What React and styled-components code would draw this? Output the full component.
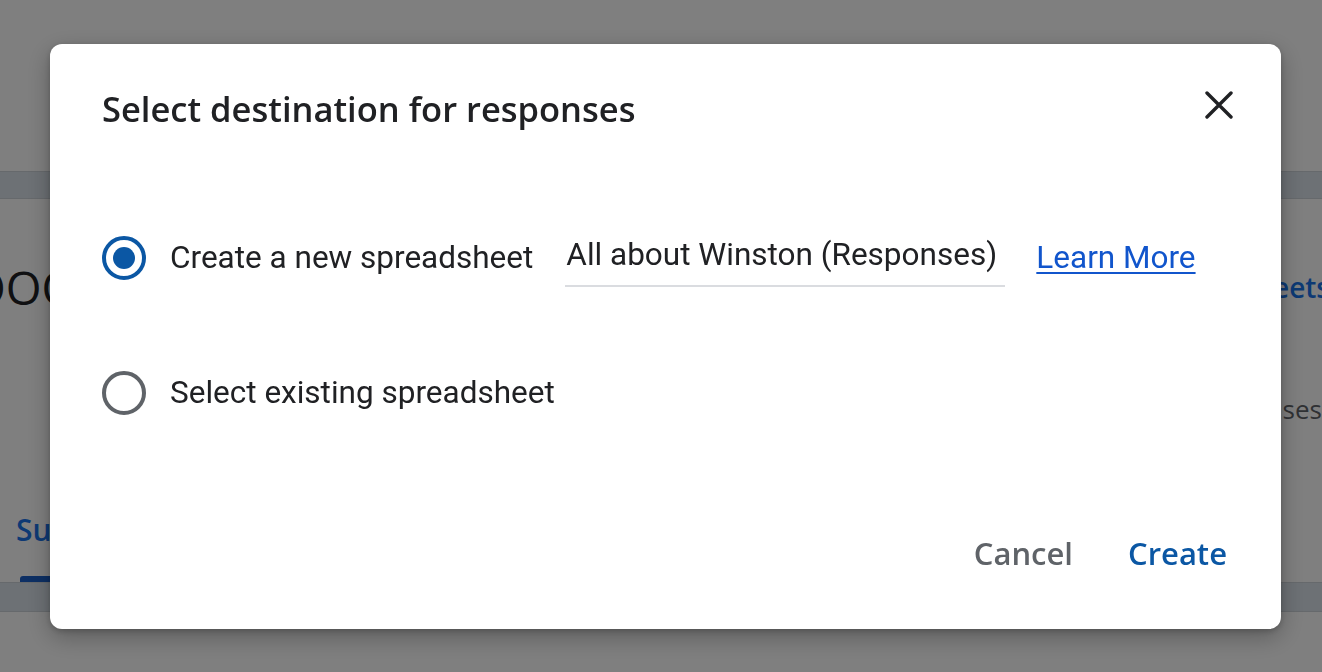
import React, { useState } from 'react';
import styled, { createGlobalStyle } from 'styled-components';

const GlobalStyle = createGlobalStyle`
  html, body {
    margin: 0;
    padding: 0;
    background: #fff;
    overflow: hidden;
  }
  * {
    box-sizing: border-box;
  }
`;

const display = `"Open Sans", "Noto Sans", Arial, sans-serif`;
const body = `Roboto, "Liberation Sans", Arial, sans-serif`;

/* page underneath the modal */

const Page = styled.div`
  width: 1322px;
  height: 672px;
  overflow: hidden;
  display: flex;
  flex-direction: column;
  background: #fff;
  font-family: ${display};
`;

const TopArea = styled.div`
  height: 171px;
  flex-shrink: 0;
`;

const Band = styled.div`
  height: ${({ $h }) => $h}px;
  flex-shrink: 0;
  background: #dae2ea;
  border-top: 1px solid #cdd3d9;
  border-bottom: 1px solid #cdd3d9;
`;

const Card = styled.div`
  height: 383px;
  flex-shrink: 0;
  display: flex;
  flex-direction: column;
`;

const StatsRow = styled.div`
  display: flex;
  justify-content: space-between;
  align-items: center;
  margin-top: 66px;
  height: 44px;
`;

const Count = styled.div`
  font-size: 46px;
  color: #202124;
  margin-left: -30px;
  white-space: nowrap;
`;

const SheetsLink = styled.div`
  font-size: 28px;
  font-weight: 600;
  color: #1a73e8;
  margin-right: -8px;
  white-space: nowrap;
`;

const AcceptRow = styled.div`
  display: flex;
  justify-content: flex-end;
  margin-top: 82px;
  font-size: 26px;
  color: #5f6368;
  white-space: nowrap;
`;

const Tabs = styled.div`
  margin-top: auto;
  display: flex;
  padding-left: 16px;
`;

const Tab = styled.div`
  display: flex;
  flex-direction: column;
  align-items: flex-start;
  font-size: 30px;
  font-weight: 600;
  color: #1a73e8;
`;

const TabIndicator = styled.span`
  margin-top: 26px;
  margin-left: 4px;
  width: 120px;
  height: 6px;
  border-radius: 3px 3px 0 0;
  background: #1a5fc8;
`;

/* modal */

const Overlay = styled.div`
  position: fixed;
  inset: 0;
  background: rgba(0, 0, 0, 0.5);
  display: flex;
  align-items: flex-start;
  padding: 44px 0 0 50px;
`;

const Dialog = styled.div`
  width: 1231px;
  height: 585px;
  background: #fff;
  border-radius: 12px;
  box-shadow: 0 8px 24px rgba(0, 0, 0, 0.28), 0 2px 6px rgba(0, 0, 0, 0.2);
  display: flex;
  flex-direction: column;
`;

const Header = styled.div`
  display: flex;
  align-items: flex-start;
  justify-content: space-between;
  padding: 37px 38px 0 52px;
`;

const Title = styled.h2`
  margin: 4px 0 0;
  font-family: ${display};
  font-size: 34.5px;
  font-weight: 600;
  line-height: 48px;
  color: #202124;
`;

const CloseButton = styled.button`
  width: 48px;
  height: 48px;
  border: 0;
  padding: 0;
  background: transparent;
  display: flex;
  align-items: center;
  justify-content: center;
  cursor: pointer;
`;

const Options = styled.div`
  display: flex;
  flex-direction: column;
  gap: 71px;
  padding: 93px 0 0 52px;
`;

const OptionRow = styled.label`
  display: flex;
  align-items: center;
  height: 64px;
  cursor: pointer;
`;

const Radio = styled.span`
  width: 44px;
  height: 44px;
  flex-shrink: 0;
  border-radius: 50%;
  border: 4px solid ${({ $checked }) => ($checked ? '#0b57a4' : '#5f6368')};
  display: flex;
  align-items: center;
  justify-content: center;

  &::after {
    content: '';
    width: 22px;
    height: 22px;
    border-radius: 50%;
    background: ${({ $checked }) => ($checked ? '#0b57a4' : 'transparent')};
  }
`;

const OptionLabel = styled.span`
  margin-left: 24px;
  font-family: ${body};
  font-size: 31.5px;
  line-height: 40px;
  color: #202124;
  white-space: nowrap;
`;

const NameField = styled.div`
  margin-left: 32px;
  margin-top: 6px;
  width: 440px;
  padding: 0 0 10px 1px;
  border-bottom: 2px solid #dadce0;
  font-family: ${body};
  font-size: 31.5px;
  line-height: 40px;
  color: #202124;
  white-space: nowrap;
`;

const LearnMore = styled.a`
  margin-left: 31px;
  font-family: ${body};
  font-size: 31.5px;
  line-height: 40px;
  color: #1155cc;
  text-decoration: underline;
  text-underline-offset: 4px;
  text-decoration-thickness: 2px;
  white-space: nowrap;
`;

const Footer = styled.div`
  margin-top: auto;
  display: flex;
  justify-content: flex-end;
  gap: 31px;
  padding: 0 42px 52px 0;
`;

const TextButton = styled.button`
  height: 48px;
  padding: 0 12px;
  border: 0;
  background: transparent;
  font-family: ${display};
  font-size: 31px;
  font-weight: 600;
  color: ${({ $primary }) => ($primary ? '#0b57a4' : '#5f6368')};
  cursor: pointer;
`;

const CloseIcon = () => (
  <svg width="28" height="28" viewBox="0 0 28 28" fill="none">
    <path
      d="M2 2 L26 26 M26 2 L2 26"
      stroke="#202124"
      strokeWidth="3.4"
      strokeLinecap="round"
    />
  </svg>
);

export default function App() {
  const [choice, setChoice] = useState('new');

  return (
    <>
      <GlobalStyle />
      <Page>
        <TopArea />
        <Band $h={28} />
        <Card>
          <StatsRow>
            <Count>OOO</Count>
            <SheetsLink>Link to Sheets</SheetsLink>
          </StatsRow>
          <AcceptRow>Accepting responses</AcceptRow>
          <Tabs>
            <Tab>
              Summary
              <TabIndicator />
            </Tab>
          </Tabs>
        </Card>
        <Band $h={30} />
      </Page>

      <Overlay>
        <Dialog role="dialog">
          <Header>
            <Title>Select destination for responses</Title>
            <CloseButton aria-label="Close">
              <CloseIcon />
            </CloseButton>
          </Header>

          <Options>
            <OptionRow onClick={() => setChoice('new')}>
              <Radio $checked={choice === 'new'} />
              <OptionLabel>Create a new spreadsheet</OptionLabel>
              <NameField>All about Winston (Responses)</NameField>
              <LearnMore href="#">Learn More</LearnMore>
            </OptionRow>
            <OptionRow onClick={() => setChoice('existing')}>
              <Radio $checked={choice === 'existing'} />
              <OptionLabel>Select existing spreadsheet</OptionLabel>
            </OptionRow>
          </Options>

          <Footer>
            <TextButton>Cancel</TextButton>
            <TextButton $primary>Create</TextButton>
          </Footer>
        </Dialog>
      </Overlay>
    </>
  );
}
